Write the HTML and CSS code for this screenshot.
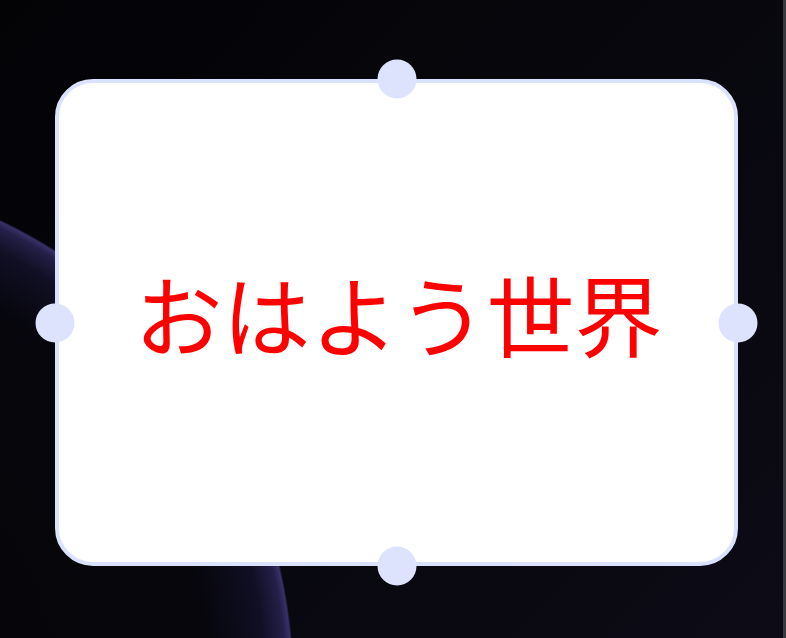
FILE: index.html
```html
<!DOCTYPE html>
<html lang="ja">
<head>
<meta charset="utf-8">
<title>おはよう世界</title>
<link rel="stylesheet" href="styles.css">
</head>
<body>
<div class="stage">
  <div class="card">
    <p class="greeting">おはよう世界</p>
    <span class="handle handle-top"></span>
    <span class="handle handle-right"></span>
    <span class="handle handle-bottom"></span>
    <span class="handle handle-left"></span>
  </div>
</div>
</body>
</html>
```
FILE: styles.css
```css
html, body {
  margin: 0;
  padding: 0;
  height: 100%;
}
body {
  background: #06060b;
  overflow: hidden;
}
.stage {
  box-sizing: border-box;
  width: 100vw;
  height: 100vh;
  padding: 79px 0 0 55px;
  border-right: 3px solid #393940;
  background:
    radial-gradient(circle 514px at -220px 684px,
      #040407 0,
      #06060c 430px,
      #110f24 485px,
      #241f48 506px,
      #37316a 512px,
      rgba(0,0,0,0) 514px),
    linear-gradient(135deg, #030306 0%, #07070d 50%, #0d0b16 100%);
}
.card {
  position: relative;
  box-sizing: border-box;
  width: 683px;
  height: 487px;
  border: 4px solid #dbe2fd;
  border-radius: 38px;
  background: #ffffff;
  display: flex;
  align-items: center;
  justify-content: center;
}
.greeting {
  margin: 0;
  color: #ff0000;
  font-family: "Noto Sans CJK JP", "Noto Sans", sans-serif;
  font-size: 88px;
  line-height: 1;
  padding: 0 0 22px 4px;
}
.handle {
  position: absolute;
  width: 39px;
  height: 39px;
  border-radius: 50%;
  background: #dde3fd;
}
.handle-top {
  top: -4px;
  left: 50%;
  transform: translate(-50%, -50%);
}
.handle-bottom {
  bottom: -4px;
  left: 50%;
  transform: translate(-50%, 50%);
}
.handle-left {
  left: -4px;
  top: 50%;
  transform: translate(-50%, -50%);
}
.handle-right {
  right: -4px;
  top: 50%;
  transform: translate(50%, -50%);
}
```
